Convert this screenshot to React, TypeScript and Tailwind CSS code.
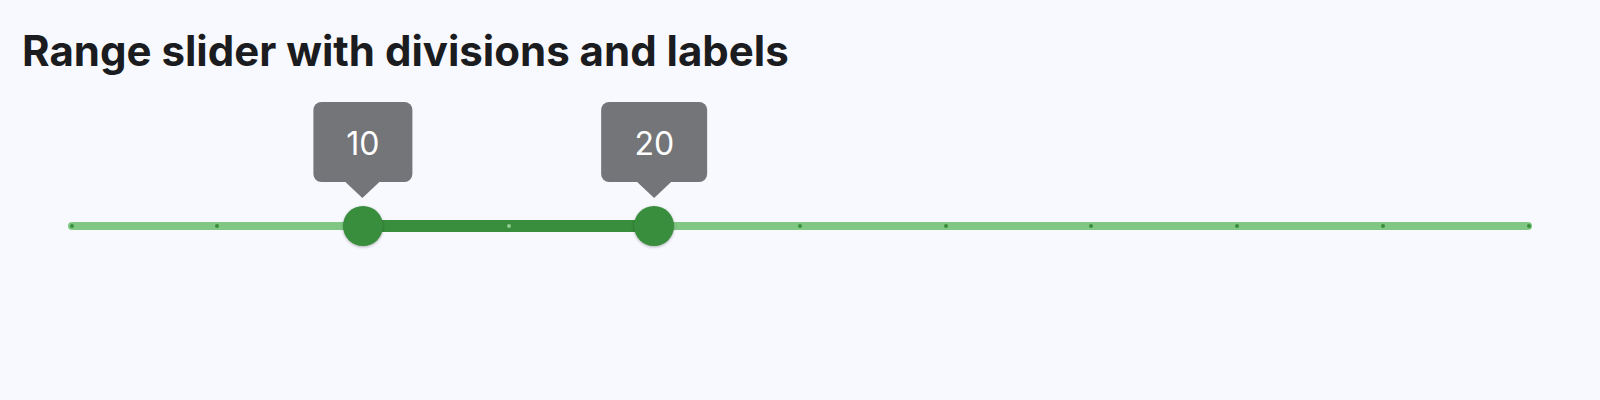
import React from "react";

const MIN = 0;
const MAX = 50;
const DIVISIONS = 10;
const TRACK_W = 1464;
const INSET = 3.5;
const SPAN = TRACK_W - INSET * 2;

const pos = (v: number) => INSET + ((v - MIN) / (MAX - MIN)) * SPAN;

function Tooltip({ value }: { value: number }) {
  return (
    <div
      className="absolute top-[-120px] flex -translate-x-1/2 flex-col items-center"
      style={{ left: pos(value) }}
    >
      <div className="flex h-[80px] items-center justify-center rounded-[8px] bg-[#747579] px-[33px] pt-[3px] text-[32px] leading-none text-white">
        {value}
      </div>
      <svg width="34" height="16" viewBox="0 0 34 16" className="block">
        <polygon points="0,0 34,0 17,16" fill="#747579" />
      </svg>
    </div>
  );
}

export default function App() {
  const start = 10;
  const end = 20;
  const ticks = Array.from({ length: DIVISIONS + 1 }, (_, i) => MIN + (i * (MAX - MIN)) / DIVISIONS);

  return (
    <div className="min-h-[400px] w-full bg-[#f8f9fe] font-['Inter','Noto_Sans',sans-serif]">
      <h1 className="pl-[22px] pt-[26px] text-[42px] font-bold leading-[50px] text-[#1b1c20]">
        Range slider with divisions and labels
      </h1>
      <div className="ml-[68px] mt-[24px] w-[1464px] pt-[122px]">
        <div className="relative h-[8px] rounded-full bg-[#81c784]">
          <div
            className="absolute top-[-2px] h-[12px] bg-[#388e3c]"
            style={{ left: pos(start), width: pos(end) - pos(start) }}
          />
          {ticks.map((t) => {
            const active = t > start && t < end;
            return (
              <div
                key={t}
                className={
                  active
                    ? "absolute top-[2px] h-[4px] w-[4px] -translate-x-1/2 rounded-full bg-[#8fcb8f]"
                    : "absolute top-[2px] h-[4px] w-[4px] -translate-x-1/2 rounded-full bg-[#388e3c]"
                }
                style={{ left: pos(t) }}
              />
            );
          })}
          {[start, end].map((v) => (
            <div
              key={v}
              className="absolute top-[-16px] h-[40px] w-[40px] -translate-x-1/2 rounded-full bg-[#388e3c] shadow-[0_1px_3px_rgba(0,0,0,0.3)]"
              style={{ left: pos(v) }}
            />
          ))}
          <Tooltip value={start} />
          <Tooltip value={end} />
        </div>
      </div>
    </div>
  );
}
